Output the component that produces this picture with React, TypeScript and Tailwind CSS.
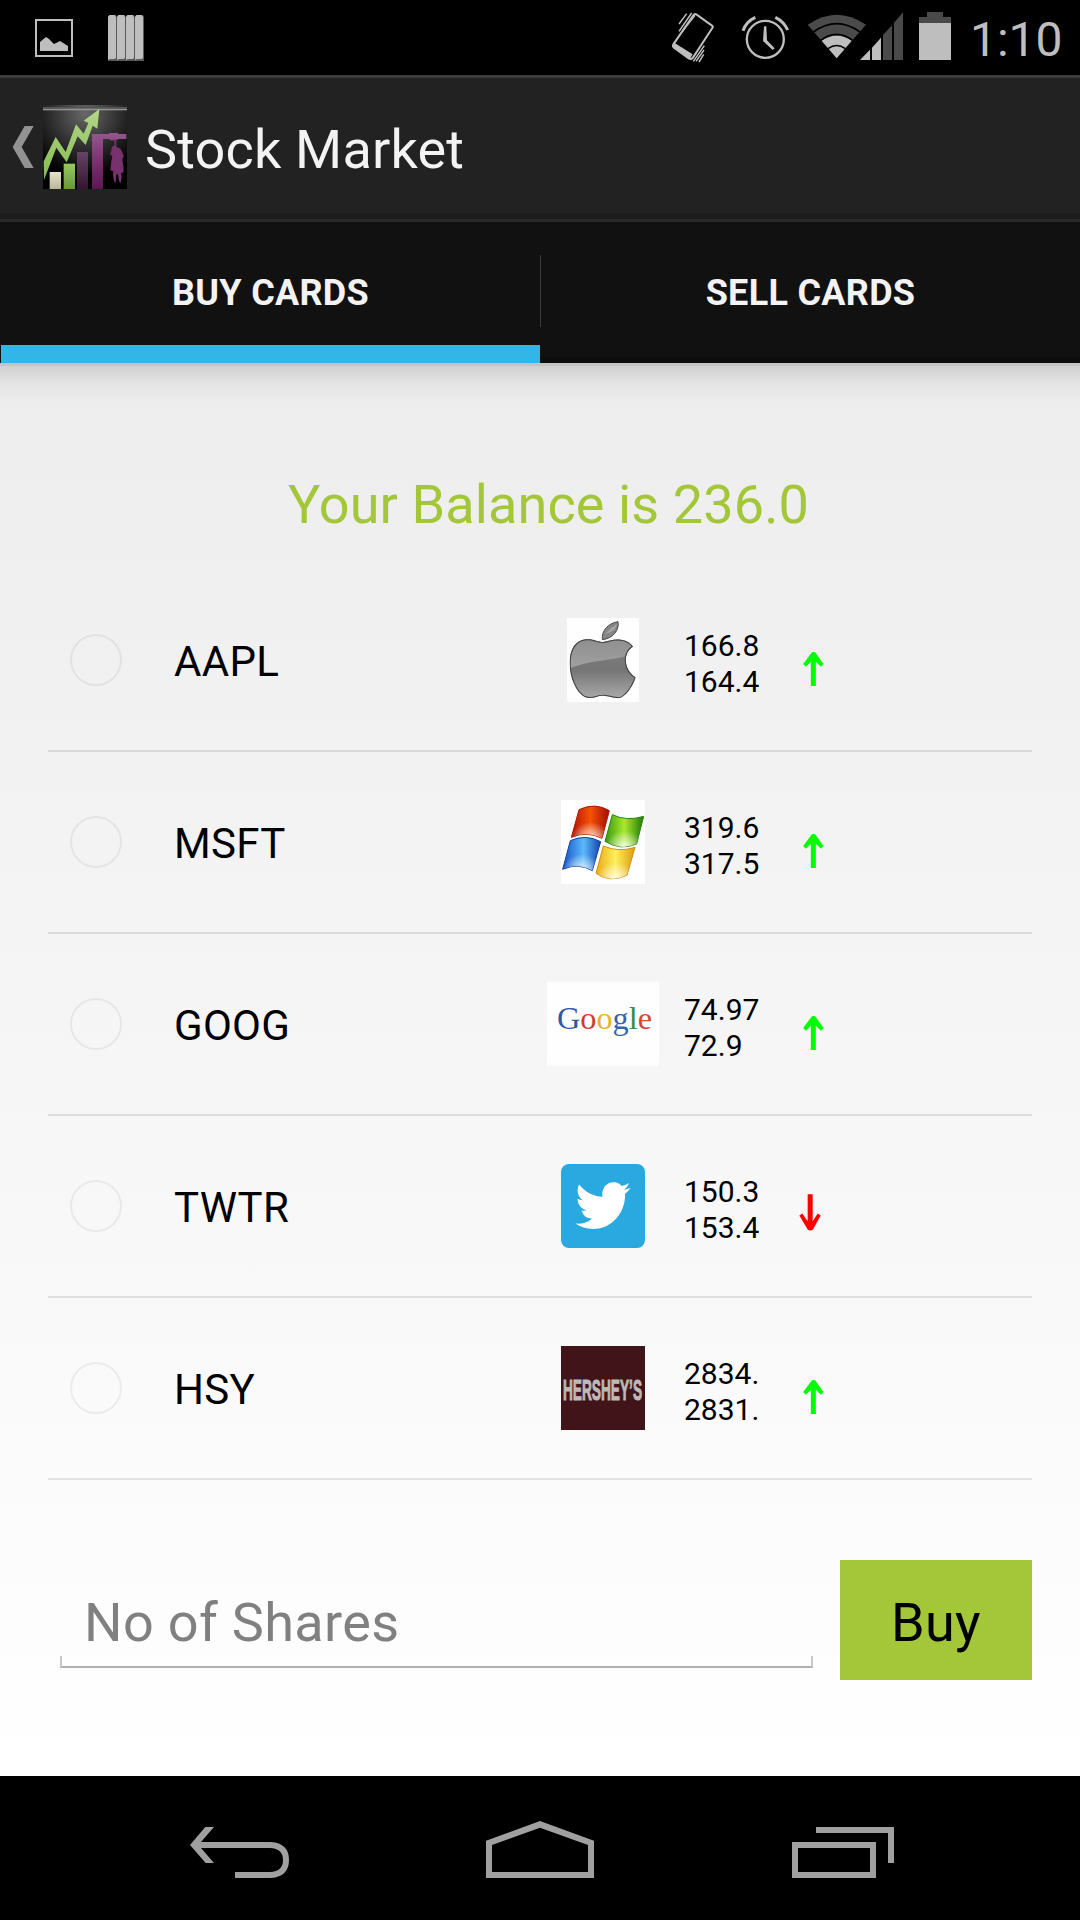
import React from "react";

function AppIcon() {
  return (
    <svg className="h-[84px] w-[84px]" viewBox="129 45 252 252">
      <defs>
        <radialGradient id="ic-bg" cx="0.5" cy="0.1" r="0.75">
          <stop offset="0" stopColor="#686868" />
          <stop offset="0.45" stopColor="#383838" />
          <stop offset="1" stopColor="#000" />
        </radialGradient>
        <linearGradient id="ic-green" x1="0" y1="0" x2="0" y2="1">
          <stop offset="0" stopColor="#b5d68b" />
          <stop offset="1" stopColor="#84ba4c" />
        </linearGradient>
        <linearGradient id="ic-mag" x1="0" y1="0" x2="0" y2="1">
          <stop offset="0" stopColor="#97578e" />
          <stop offset="0.5" stopColor="#7c3270" />
          <stop offset="1" stopColor="#5c1752" />
        </linearGradient>
        <linearGradient id="ic-pur" x1="0" y1="0" x2="0" y2="1">
          <stop offset="0" stopColor="#654364" />
          <stop offset="1" stopColor="#351433" />
        </linearGradient>
        <linearGradient id="ic-bei" x1="0" y1="0" x2="0" y2="1">
          <stop offset="0" stopColor="#e6e3ca" />
          <stop offset="1" stopColor="#b9b698" />
        </linearGradient>
        <linearGradient id="ic-bar" x1="0" y1="0" x2="0" y2="1">
          <stop offset="0" stopColor="#97c95f" />
          <stop offset="1" stopColor="#6b9640" />
        </linearGradient>
      </defs>
      <path d="M129 54l9-9h234l9 9v243H129z" fill="url(#ic-bg)" />
      <rect x="129" y="51" width="252" height="4" fill="#555" />
      <rect x="129" y="56" width="252" height="5" fill="#949494" />
      <path d="M131 214L167 141L197 186L228 103L251 131L265 99L251 92L298 57L292 116L278 107L257 165L233 139L200 217L169 173L132 270z" fill="url(#ic-green)" />
      <rect x="149" y="246" width="34" height="51" fill="url(#ic-bei)" />
      <rect x="191" y="221" width="34" height="76" fill="url(#ic-bar)" />
      <rect x="231" y="186" width="33" height="111" fill="url(#ic-pur)" />
      <path d="M276 132h51v-3h20l2-2 3 3h3v2h24v15h-25l-4 4h-18l-4-4h-19v150h-33z" fill="url(#ic-mag)" />
      <path d="M341 148h7l1 22 12 6 7 13 3 10-4 10 1 6 3 21-1 12h-6l1 14-3 18-4-5-5-24-4 3-2 24-5-4-3-18 1-12-9-3 3-27 3-15-7-6 3-9 3-13 8-7z" fill="#77316c" />
    </svg>
  );
}

function StatusBar() {
  return (
    <div className="flex h-[75px] items-start bg-black">
      <svg className="ml-[35px] h-[63px] w-[38px]" viewBox="35 0 38 63">
        <rect x="36" y="20" width="36" height="36" fill="none" stroke="#bebebe" strokeWidth="2" />
        <path d="M40 42l6-5 3 2 5 5 6-3 8 5v5H40z" fill="#bebebe" />
      </svg>
      <svg className="ml-[35px] h-[63px] w-[36px]" viewBox="108 0 36 63">
        {[108, 117, 126, 135].map((x) => (
          <g key={x}>
            <path d={`M${x + 1} 15h7l1 2v44h-9v-44z`} fill="#5a5a5a" />
            <path d={`M${x} 17l1.500 -2h5l1.500 2v41l-1.500 1h-4.500l-2 1z`} fill="#bebebe" />
          </g>
        ))}
      </svg>
      <svg className="ml-[527px] h-[63px] w-[44px]" viewBox="93 0 132 189">
        <path d="M169 43L216 77Q220 80 217 84L158 174Q153 179 146 175L102 143Q97 139 100 133L160 46Q164 40 169 43z" fill="none" stroke="#bebebe" strokeWidth="6" />
        <path d="M104 129L158 163L149 178L98 141z" fill="#bebebe" />
        <path d="M140 41L117 72M155 39L117 94M165 46L127 94M193 137L160 184M192 150L168 184M191 163L177 186" fill="none" stroke="#bebebe" strokeWidth="4.500" />
      </svg>
      <svg className="ml-[26px] h-[63px] w-[49px]" viewBox="303 0 147 189">
        <circle cx="376" cy="118" r="55.500" fill="none" stroke="#bebebe" strokeWidth="7" />
        <path d="M372 79h7l2 42 23 24-6 5-29-27z" fill="#bebebe" />
        <path d="M309 92Q318 65 346 52M443 90Q432 65 406 52" fill="none" stroke="#bebebe" strokeWidth="9" />
      </svg>
      <svg className="ml-[17px] h-[63px] w-[97px]" viewBox="501 0 291 189">
        <path d="M503 74Q590 14 678 74L590 175z" fill="#4a4a4a" />
        <path d="M545 122Q590 93 635 122L590 175z" fill="#bebebe" />
        <path d="M520 96Q590 46 660 96M542 121Q590 85 638 121M564 146Q590 127 616 146" fill="none" stroke="#000" strokeWidth="5" />
        <path d="M660 180L690 149V180zM696 143L723 113V180H696z" fill="#bebebe" />
        <path d="M729 105L756 76V180H729zM762 68L789 37V180H762z" fill="#4a4a4a" />
      </svg>
      <svg className="ml-[15px] h-[63px] w-[32px]" viewBox="837 0 96 189">
        <path d="M837 69V51h24V36h48v15h24v18z" fill="#4a4a4a" />
        <rect x="837" y="69" width="96" height="111" fill="#bebebe" />
      </svg>
      <span className="ml-[19px] mt-[12px] text-[48px] leading-[56px] text-[#bebebe]">1:10</span>
    </div>
  );
}

function AppleLogo() {
  return (
    <svg className="h-[84px] w-[72px]" viewBox="111 84 216 252">
      <defs>
        <linearGradient id="ap" x1="0" y1="0" x2="0" y2="1">
          <stop offset="0" stopColor="#858585" />
          <stop offset="0.5" stopColor="#747474" />
          <stop offset="1" stopColor="#b0b0b0" />
        </linearGradient>
        <linearGradient id="ap-shine" x1="0" y1="0" x2="0" y2="1">
          <stop offset="0" stopColor="#8d8d8d" />
          <stop offset="1" stopColor="#a2a2a2" />
        </linearGradient>
        <clipPath id="ap-clip">
          <path d="M220 156C237 153 250 147 271 149C287 150 301 158 309 170C278 187 280 240 317 262C310 285 292 313 275 322C256 330 240 316 218 317C200 317 185 330 164 321C138 306 119 263 119 219C119 180 135 151 168 148C190 146 202 156 220 156z" />
        </clipPath>
      </defs>
      <rect x="111" y="84" width="216" height="252" fill="#fefefe" />
      <g clipPath="url(#ap-clip)">
        <rect x="111" y="140" width="216" height="196" fill="url(#ap)" />
        <path d="M111 140H327V175C285 218 200 200 111 238z" fill="url(#ap-shine)" />
        <path d="M220 156C237 153 250 147 271 149C287 150 301 158 309 170C278 187 280 240 317 262C310 285 292 313 275 322C256 330 240 316 218 317C200 317 185 330 164 321C138 306 119 263 119 219C119 180 135 151 168 148C190 146 202 156 220 156z" fill="none" stroke="#444" strokeWidth="6" />
      </g>
      <path d="M217 149C214 122 235 99 264 95C269 120 248 146 217 149z" fill="#858585" stroke="#484848" strokeWidth="3" />
      <path d="M224 133Q242 113 261 102Q256 124 236 128z" fill="#a5a5a5" />
    </svg>
  );
}

function WindowsLogo() {
  return (
    <svg className="h-[84px] w-[84px]" viewBox="93 630 252 252">
      <defs>
        <linearGradient id="w-r">
          <stop offset="0" stopColor="#b50f05" />
          <stop offset="0.5" stopColor="#f55305" />
          <stop offset="1" stopColor="#a30b05" />
        </linearGradient>
        <linearGradient id="w-g">
          <stop offset="0" stopColor="#35990c" />
          <stop offset="0.5" stopColor="#a8e82f" />
          <stop offset="1" stopColor="#1d7906" />
        </linearGradient>
        <linearGradient id="w-b">
          <stop offset="0" stopColor="#1551c4" />
          <stop offset="0.55" stopColor="#5bb9fb" />
          <stop offset="1" stopColor="#1144ae" />
        </linearGradient>
        <linearGradient id="w-y">
          <stop offset="0" stopColor="#e9a915" />
          <stop offset="0.5" stopColor="#fdf05a" />
          <stop offset="1" stopColor="#dc9a0c" />
        </linearGradient>
        <radialGradient id="w-s" cx="0.5" cy="1" r="0.5">
          <stop offset="0" stopColor="#fff" stopOpacity="0.85" />
          <stop offset="1" stopColor="#fff" stopOpacity="0" />
        </radialGradient>
      </defs>
      <rect x="93" y="630" width="252" height="252" fill="#fff" />
      {[
        { d: "M147 659Q195 636 238 662L216 745Q172 722 124 742z", f: "url(#w-r)", s: "#a81a08" },
        { d: "M247 674Q290 695 341 679L320 762Q272 783 225 754z", f: "url(#w-g)", s: "#2b8410" },
        { d: "M121 752Q167 731 212 755L187 842Q145 817 98 838z", f: "url(#w-b)", s: "#123e9d" },
        { d: "M220 768Q266 788 315 772L291 856Q240 880 198 850z", f: "url(#w-y)", s: "#d2900f" },
      ].map((p) => (
        <g key={p.s}>
          <path d={p.d} fill={p.f} stroke={p.s} strokeWidth="3" strokeLinejoin="round" />
          <path d={p.d} fill="url(#w-s)" />
        </g>
      ))}
    </svg>
  );
}

function GoogleLogo() {
  return (
    <svg className="h-[84px] w-[112px]" viewBox="0 0 112 84">
      <rect width="112" height="84" fill="#fefefe" />
      <text x="10" y="46.500" fontSize="31.500" textLength="95" lengthAdjust="spacingAndGlyphs" fontFamily="'Liberation Serif', serif">
        <tspan fill="#3157a8">G</tspan>
        <tspan fill="#cf3a32">o</tspan>
        <tspan fill="#e6b32c">o</tspan>
        <tspan fill="#3a62b0">g</tspan>
        <tspan fill="#3c8a48">l</tspan>
        <tspan fill="#d3483d">e</tspan>
      </text>
    </svg>
  );
}

function TwitterLogo() {
  return (
    <svg className="h-[84px] w-[84px] bg-white/60" viewBox="93 612 252 252">
      <rect x="93" y="612" width="252" height="252" rx="24" fill="#2aa9e0" />
      <path
        transform="translate(136 650.500) scale(6.920 7.180)"
        fill="#fff"
        d="M23.953 4.57a10 10 0 01-2.825.775 4.958 4.958 0 002.163-2.723c-.951.555-2.005.959-3.127 1.184a4.92 4.92 0 00-8.384 4.482C7.69 8.095 4.067 6.13 1.64 3.162a4.822 4.822 0 00-.666 2.475c0 1.71.87 3.213 2.188 4.096a4.904 4.904 0 01-2.228-.616v.06a4.923 4.923 0 003.946 4.827 4.996 4.996 0 01-2.212.085 4.936 4.936 0 004.604 3.417 9.867 9.867 0 01-6.102 2.105c-.39 0-.779-.023-1.17-.067a13.995 13.995 0 007.557 2.209c9.053 0 13.998-7.496 13.998-13.985 0-.21 0-.42-.015-.63A9.935 9.935 0 0024 4.59z"
      />
    </svg>
  );
}

function HersheyLogo() {
  return (
    <svg className="h-[84px] w-[84px]" viewBox="0 0 84 84">
      <rect width="84" height="84" fill="#41141a" />
      <g transform="translate(2 53.800) scale(1 2.250)">
        <text fontSize="13.500" fontWeight="bold" textLength="79" lengthAdjust="spacingAndGlyphs" fill="#bdb9b9" stroke="#bdb9b9" strokeWidth="0.500" fontFamily="'Liberation Sans', sans-serif">
          HERSHEY’S
        </text>
      </g>
    </svg>
  );
}

const stocks = [
  { name: "AAPL", logo: <AppleLogo />, now: "166.8", prev: "164.4", up: true },
  { name: "MSFT", logo: <WindowsLogo />, now: "319.6", prev: "317.5", up: true },
  { name: "GOOG", logo: <GoogleLogo />, now: "74.97", prev: "72.9", up: true },
  { name: "TWTR", logo: <TwitterLogo />, now: "150.3", prev: "153.4", up: false },
  { name: "HSY", logo: <HersheyLogo />, now: "2834.", prev: "2831.", up: true },
];

function Arrow({ up }: { up: boolean }) {
  return up ? (
    <svg className="ml-[43px] mt-[18px] h-[34px] w-[21px]" viewBox="820 186 62 102">
      <path d="M843 288V215L828 230L820 222L845 188Q851 183 857 188L881 222L873 230L858 215V288z" fill="#0f0" />
    </svg>
  ) : (
    <svg className="ml-[39px] mt-[13px] h-[37px] w-[22px]" viewBox="808 702 66 110">
      <path d="M834 702V783L818 760L809 766L834 808Q842 814 850 808L873 766L864 760L849 783V702z" fill="#f00" />
    </svg>
  );
}

export default function App() {
  return (
    <div className="flex h-[1920px] w-[1080px] flex-col overflow-hidden font-['Roboto',sans-serif]">
      <StatusBar />
      <header className="flex h-[147px] items-center border-t-[3px] border-[#3b3b3b] bg-[#222] pb-[6px] shadow-[inset_0_-3px_0_#292929,inset_0_-9px_0_#1c1c1c]">
        <svg className="ml-[12px] h-[42px] w-[22px]" viewBox="36 108 66 126">
          <path d="M74 108h27L65 171l36 63H74L38 171z" fill="#929292" />
        </svg>
        <div className="ml-[9px]">
          <AppIcon />
        </div>
        <h1 className="ml-[18px] mt-[6px] text-[54px] leading-[64px] tracking-[0.18px] text-[#f3f3f3]">Stock Market</h1>
      </header>
      <nav className="flex h-[141px] items-center bg-[#111] text-[36px] font-bold tracking-[0.3px] text-[#f3f3f3]">
        <div className="ml-px flex h-full w-[539px] items-center justify-center border-b-[18px] border-[#33b5e5] pt-[18px]">BUY CARDS</div>
        <div className="mb-[3px] h-[72px] w-px bg-[#3a3a3a]" />
        <div className="flex h-full flex-1 items-center justify-center shadow-[inset_0_-6px_0_#0d0d0d]">SELL CARDS</div>
      </nav>
      <main className="flex h-[1413px] flex-col bg-linear-to-b from-[#ededed] to-white">
        <div className="h-[3px] bg-[#c4c4c4]" />
        <div className="h-[36px] bg-linear-to-b from-black/12 via-black/4 to-transparent" />
        <p className="mt-[70px] pl-[17px] text-center text-[54px] leading-[66px] tracking-[0.12px] text-[#a4c739]">Your Balance is 236.0</p>
        <ul className="mx-12 mt-[32px]">
          {stocks.map((s) => (
            <li key={s.name} className="flex h-[182px] items-center border-b-2 border-black/10">
              <div className="ml-[22px] h-[52px] w-[52px] shrink-0 rounded-full border-2 border-black/6" />
              <span className="ml-[52px] w-[373px] shrink-0 pt-[3px] text-[42px] leading-[50px] tracking-[0.3px] text-black">{s.name}</span>
              <div className="flex w-[112px] shrink-0 justify-center">{s.logo}</div>
              <div className="ml-[25px] w-[76px] shrink-0 pt-[8px] text-[30px] leading-[36px] text-black">
                <div>{s.now}</div>
                <div>{s.prev}</div>
              </div>
              <Arrow up={s.up} />
            </li>
          ))}
        </ul>
        <div className="mt-[80px] flex items-start px-12">
          <div className="ml-[12px] flex h-[108px] w-[753px] flex-col">
            <span className="ml-[24px] mt-[30px] h-[66px] text-[54px] leading-[66px] tracking-[0.36px] text-[#808080]">No of Shares</span>
            <div className="h-[12px] border-x-2 border-b-2 border-x-[#c8c8c8] border-b-[#b0b0b0]" />
          </div>
          <button className="ml-[27px] h-[120px] w-[192px] bg-[#a4c739] pt-[4px] text-[54px] tracking-[0.4px] text-black">Buy</button>
        </div>
      </main>
      <footer className="flex h-[144px] items-start bg-black">
        <svg className="ml-[190px] mt-[51px] h-[51px] w-[99px]" viewBox="90 171 297 153">
          <path d="M136 171h26L123 216H333Q387 220 387 270Q387 320 333 324H225V306H330Q369 305 369 270Q369 236 330 234H123L162 279H137L90 225z" fill="#a0a0a0" />
        </svg>
        <svg className="ml-[197px] mt-[45px] h-[57px] w-[108px]" viewBox="978 153 324 171">
          <path fillRule="evenodd" d="M1140 153L1302 212V324H978V212zM1140 173L996 225V306H1284V225z" fill="#a0a0a0" />
        </svg>
        <svg className="ml-[198px] mt-[51px] h-[51px] w-[102px]" viewBox="96 111 306 153">
          <path fillRule="evenodd" d="M96 156H348V264H96zM114 174V246H330V174zM168 111H402V219H384V129H168z" fill="#a0a0a0" />
        </svg>
      </footer>
    </div>
  );
}
